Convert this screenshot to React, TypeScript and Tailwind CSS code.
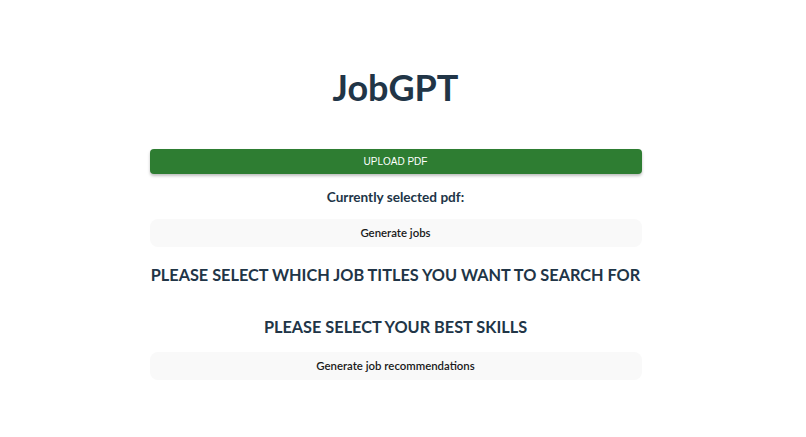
export default function App() {
  return (
    <div className="min-h-[437px] w-[791px] bg-white text-[#213547] font-['Lato',sans-serif]">
      <div className="mx-auto w-[492px] pt-[63px] flex flex-col items-stretch text-center">
        <h1 className="text-[36px] leading-[48px] font-bold">JobGPT</h1>

        <button className="mt-[38px] h-[25px] w-full rounded bg-[#2e7d32] text-white text-[10px] font-['Liberation_Sans',sans-serif] shadow-[0_2px_3px_rgba(0,0,0,0.25)]">
          UPLOAD PDF
        </button>

        <h3 className="mt-[11px] text-[13.6px] leading-[24px] font-bold">Currently selected pdf:</h3>

        <button className="mt-[10px] h-[28px] w-full rounded-lg bg-[#f9f9f9] text-[11.4px] font-semibold text-[#1a1a1a]">
          Generate jobs
        </button>

        <h2 className="mt-[14px] text-[16.3px] leading-[27px] font-bold whitespace-nowrap">PLEASE SELECT WHICH JOB TITLES YOU WANT TO SEARCH FOR</h2>

        <h2 className="mt-[25px] text-[16.3px] leading-[27px] font-bold">PLEASE SELECT YOUR BEST SKILLS</h2>

        <button className="mt-[12px] h-[28px] w-full rounded-lg bg-[#f9f9f9] text-[11.4px] font-semibold text-[#1a1a1a]">
          Generate job recommendations
        </button>
      </div>
    </div>
  );
}
